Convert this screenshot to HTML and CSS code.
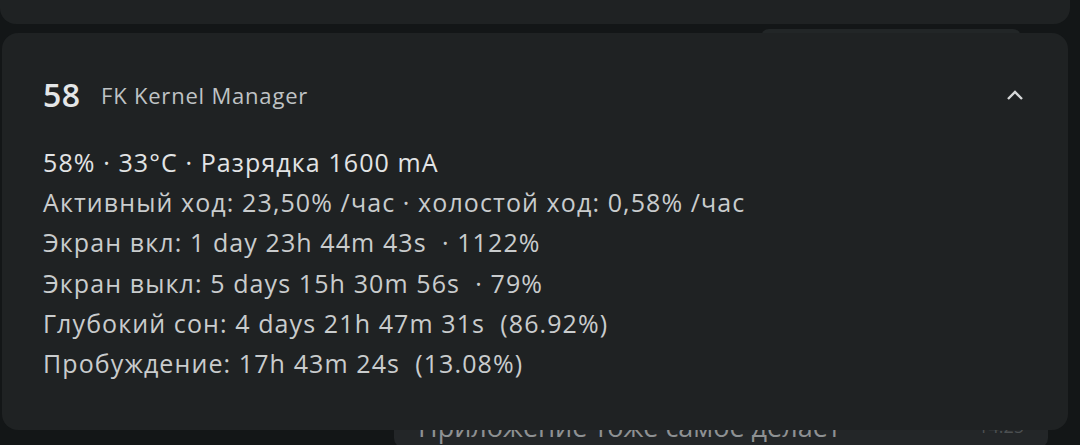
FILE: index.html
```html
<!DOCTYPE html>
<html lang="ru">
<head>
  <meta charset="UTF-8" />
  <title>FK Kernel Manager</title>
  <link rel="stylesheet" href="styles.css">
</head>
<body>
  <div class="top-card"></div>

  <div class="stack">
    <div class="peek-card"></div>

    <div class="notif">
      <div class="notif-head">
        <span class="level">58</span>
        <span class="app-name">FK Kernel Manager</span>
        <svg class="chevron" width="20" height="12" viewBox="0 0 20 12">
          <path d="M3 10 L10 3 L17 10" fill="none" stroke="#d6d8d9" stroke-width="2.4" />
        </svg>
      </div>

      <div class="notif-body">
        <div class="line first">58% · 33°C · Разрядка 1600 mA</div>
        <div class="line">Активный ход: 23,50% /час · холостой ход: 0,58% /час</div>
        <div class="line">Экран вкл: 1 day 23h 44m 43s &nbsp;· 1122%</div>
        <div class="line">Экран выкл: 5 days 15h 30m 56s &nbsp;· 79%</div>
        <div class="line">Глубокий сон: 4 days 21h 47m 31s &nbsp;(86.92%)</div>
        <div class="line">Пробуждение: 17h 43m 24s &nbsp;(13.08%)</div>
      </div>
    </div>

    <div class="under-card">
      <span class="under-text">Приложение тоже самое делает</span>
      <span class="under-time">14:25</span>
    </div>
  </div>
</body>
</html>
```

FILE: styles.css
```css
body {
  margin: 0;
  padding: 0;
  background: #131617;
  font-family: 'Open Sans', Roboto, sans-serif;
  width: 1080px;
  height: 445px;
  overflow: hidden;
}

.top-card {
  height: 24px;
  width: 1070px;
  background: #1f2223;
  border-radius: 0 0 16px 16px;
}

.stack {
  position: relative;
  margin-top: 9px;
}

.peek-card {
  position: absolute;
  top: -4px;
  left: 761px;
  width: 260px;
  height: 20px;
  background: #222627;
  border-radius: 8px;
}

.notif {
  position: relative;
  z-index: 2;
  margin-left: 2px;
  width: 1066px;
  height: 397px;
  background: #1f2223;
  border-radius: 16px;
  box-sizing: border-box;
  padding: 0 0 0 41px;
}

.notif-head {
  display: flex;
  align-items: center;
  height: 123px;
}

.level {
  color: #e4e6e7;
  font-size: 32px;
  font-weight: 600;
  letter-spacing: 0.5px;
  width: 58px;
}

.app-name {
  color: #bfc3c5;
  font-size: 22px;
  letter-spacing: 0.8px;
}

.chevron {
  margin-left: auto;
  margin-right: 43px;
}

.notif-body {
  color: #c9cccd;
  font-size: 25px;
  letter-spacing: 1.1px;
  margin-top: -14px;
}

.line {
  height: 40.2px;
  line-height: 40.2px;
  white-space: nowrap;
}

.line.first {
  color: #e2e4e5;
}

.under-card {
  position: relative;
  z-index: 1;
  margin: -26px 0 0 394px;
  width: 654px;
  height: 44px;
  background: #232628;
  border-radius: 10px;
  display: flex;
  align-items: center;
  padding: 0 24px;
  box-sizing: border-box;
}

.under-text {
  color: #8e9193;
  font-size: 27px;
}

.under-time {
  margin-left: auto;
  color: #4c5052;
  font-size: 18px;
}
```
